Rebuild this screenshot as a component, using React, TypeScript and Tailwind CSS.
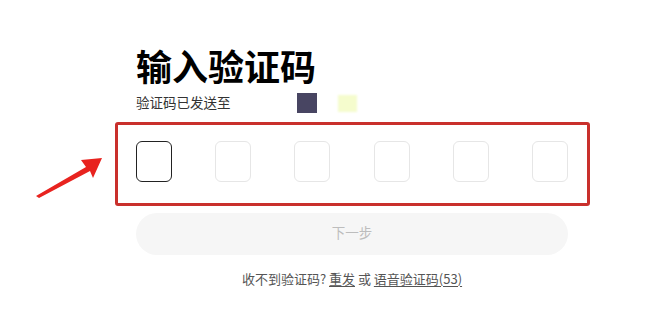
import React from 'react'

const cells = [0, 1, 2, 3, 4, 5]

export default function App() {
  return (
    <div
      className="relative h-[333px] w-[672px] overflow-hidden bg-white"
      style={{ fontFamily: '"Noto Sans CJK SC", "Noto Sans", sans-serif' }}
    >
      {/* annotation arrow */}
      <svg className="absolute left-[30px] top-[150px]" width="80" height="52" viewBox="0 0 80 52">
        <path d="M6 46 L56 17 L51 10 L72 8 L63 28 L60 21 L9 48 Z" fill="#e8231f" />
      </svg>

      <div className="ml-[136px] flex w-[432px] flex-col pt-[46px]">
        <h1 className="text-[36px] font-bold leading-[38px] text-black">输入验证码</h1>

        {/* sent to */}
        <div className="mt-[9px] flex h-[20px] items-center">
          <span className="w-[161px] text-[13.5px] leading-none text-[#333]">验证码已发送至</span>
          <div className="h-[20px] w-[20px] bg-[#484562]" />
          <div className="ml-[21px] h-[17px] w-[19px] bg-[#f5fccd] blur-[1px]" />
        </div>

        {/* code inputs, boxed in red */}
        <div className="-ml-[21px] -mr-[22px] mt-[9px] flex justify-between rounded-[3px] border-[3px] border-[#c9302c] pb-[21px] pl-[18px] pr-[19px] pt-[16px]">
          {cells.map((i) => (
            <div
              key={i}
              className={
                i === 0
                  ? 'h-[41px] w-[36px] rounded-[6px] border border-[#222]'
                  : 'h-[41px] w-[36px] rounded-[6px] border border-[#e6e6e6]'
              }
            />
          ))}
        </div>

        <button className="mt-[7px] flex h-[42px] items-center justify-center rounded-full bg-[#f6f6f6] pb-[4px] text-[13.5px] text-[#bdbdbd]">
          下一步
        </button>

        <p className="mt-[14px] text-center text-[13px] text-[#555]">
          收不到验证码? <span className="underline underline-offset-2">重发</span> 或{' '}
          <span className="underline underline-offset-2">语音验证码(53)</span>
        </p>
      </div>
    </div>
  )
}
